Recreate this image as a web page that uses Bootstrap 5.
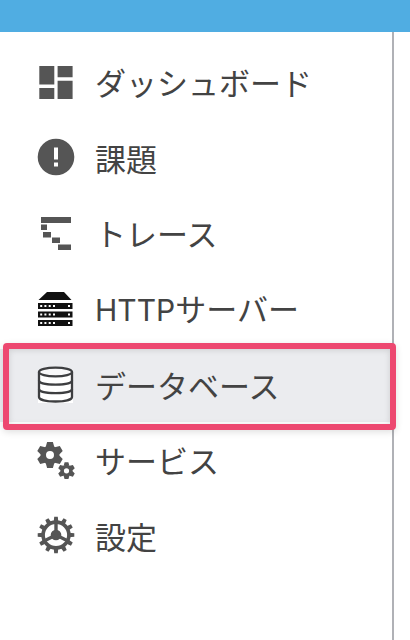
<!DOCTYPE html>
<html lang="ja">
<head>
<meta charset="utf-8">
<meta name="viewport" content="width=device-width, initial-scale=1">
<title>メニュー</title>
<link href="https://cdn.jsdelivr.net/npm/bootstrap@5.3.0/dist/css/bootstrap.min.css" rel="stylesheet">
<style>
body{font-family:"Noto Sans CJK JP",sans-serif;color:#434343;height:640px}
.topbar{height:32px;background:#50ade2}
.sidebar{width:394px;border-right:2px solid #b0b1b6;padding-top:12px}
.side-link{height:75.6px;padding-left:37px;font-size:31px;line-height:1;color:#434343;white-space:nowrap}
.side-link svg{width:38px;height:38px;flex:none;margin-right:20px;fill:#555}
.side-link.current{background:linear-gradient(#ebecef,#ebecef) 0 3px/100% 75px no-repeat}
.latin{font-family:Inter,sans-serif;font-size:30px}
.callout{left:3px;top:343px;width:393px;height:87px;border:6px solid #ed4870;border-radius:4px;box-shadow:0 2px 7px rgba(0,0,0,.13),inset 0 1px 6px rgba(0,0,0,.13);pointer-events:none}
</style>
<script src="https://cdn.jsdelivr.net/npm/bootstrap@5.3.0/dist/js/bootstrap.bundle.min.js"></script>
</head>
<body class="bg-white overflow-hidden position-relative d-flex flex-column">
<header class="topbar flex-shrink-0"></header>
<nav class="sidebar nav flex-column flex-nowrap flex-grow-1">
<a class="side-link d-flex align-items-center text-decoration-none" href="#"><svg viewBox="0 0 38 38"><path d="M2.3 3h15v18.500h-15zM20.600 3h15v11.300h-15zM2.300 25h15v11h-15zM20.600 17.800h15V36h-15z"/></svg><span id="t1">ダッシュボード</span></a>
<a class="side-link d-flex align-items-center text-decoration-none" href="#"><svg viewBox="0 0 38 38"><circle cx="19" cy="19" r="18.300"/><path fill="#fff" d="M17 9.500h4v12h-4zM17 24.500h4v4h-4z"/></svg><span id="t2">課題</span></a>
<a class="side-link d-flex align-items-center text-decoration-none" href="#"><svg viewBox="0 0 38 38"><path d="M4 3h30v6H4zM4 10.500h6V16H4zM6 18h8v5.500H6zM15 23.500h8V29h-8zM21 30.500h13V36H21z"/></svg><span id="t3">トレース</span></a>
<a class="side-link d-flex align-items-center text-decoration-none" href="#"><svg viewBox="0 0 38 38"><path fill="#111" d="M10 2h17l7.500 8h-33zM1 13h34.500v6H1zM1 21.500h34.500v6H1zM1 30h34.500v6H1z"/><path fill="#fff" d="M3.200 15h2v2h-2zm4.200 0h2v2h-2zm4.300 0h2v2h-2zm4.300 0h2v2h-2zm15 0h2v2h-2zM3.200 23.500h2v2h-2zm4.200 0h2v2h-2zm4.300 0h2v2h-2zm4.300 0h2v2h-2zm15 0h2v2h-2zM3.200 32h2v2h-2zm4.200 0h2v2h-2zm4.300 0h2v2h-2zm4.300 0h2v2h-2zm15 0h2v2h-2z"/></svg><span id="t4"><span class="latin">HTTP</span>サーバー</span></a>
<a class="side-link current d-flex align-items-center text-decoration-none" href="#"><svg viewBox="0 0 38 38"><path fill="#fff" d="M1 7h35v31H1z"/><path fill="#ebecef" d="M1 1h35v6H1z"/><g fill="none" stroke="#3d3e40" stroke-width="2.300"><path fill="#fff" d="M2 7v25c0 2.700 7.300 4.500 16.500 4.500S35 34.700 35 32V7"/><ellipse fill="#f8f8f9" cx="18.500" cy="7" rx="16.500" ry="4.300"/><path d="M2 15.500c0 2.500 7.300 4.200 16.500 4.200S35 18 35 15.500M2 24c0 2.500 7.300 4.200 16.500 4.200S35 26.500 35 24"/></g></svg><span id="t5">データベース</span></a>
<a class="side-link d-flex align-items-center text-decoration-none" href="#"><svg viewBox="0 0 38 38"><defs><g id="cog" ><circle r="6.700" fill="none" stroke="#555" stroke-width="5.400"/><g id="cogteeth"><path id="tooth" d="M-4.300-8l1.400-5h5.800l1.400 5zM-4.300 8l1.400 5h5.800l1.400-5z"/><use href="#tooth" transform="rotate(60)"/><use href="#tooth" transform="rotate(120)"/></g></g></defs><use href="#cog" transform="translate(13 14)"/><use href="#cog" transform="translate(29.500 29.800) scale(.65)"/></svg><span id="t6">サービス</span></a>
<a class="side-link d-flex align-items-center text-decoration-none" href="#"><svg viewBox="0 0 38 38"><g transform="translate(19 19)"><circle r="12.900" fill="none" stroke="#555" stroke-width="3.600"/><g id="spurs"><path id="spur" d="M-2.300-13l.5-5.300h3.600l.5 5.300zM-2.300 13l.5 5.300h3.600l.5-5.300z"/><use href="#spur" transform="rotate(30)"/><use href="#spur" transform="rotate(60)"/><use href="#spur" transform="rotate(90)"/><use href="#spur" transform="rotate(120)"/><use href="#spur" transform="rotate(150)"/></g><circle r="5.300"/><path fill="none" stroke="#555" stroke-width="3.400" d="M0 0v-13M0 0l-12 6M0 0l12 6"/></g></svg><span id="t7">設定</span></a>
</nav>
<div class="callout position-absolute"></div>
</body>
</html>
